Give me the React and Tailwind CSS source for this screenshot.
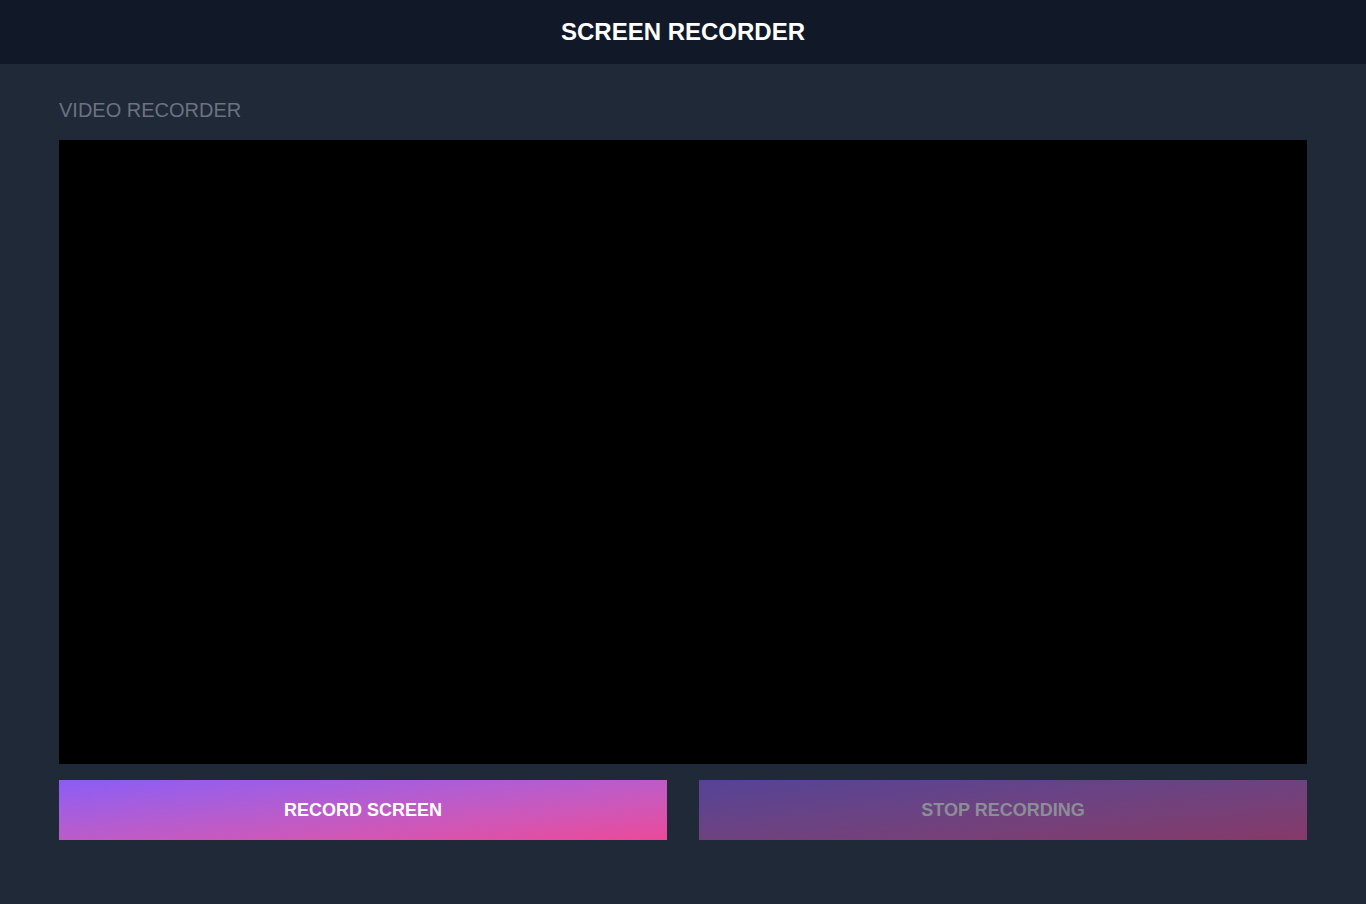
export default function App() {
  return (
    <div className="min-h-screen bg-[#1f2937] font-['Liberation_Sans',Arial,sans-serif]">
      <header className="h-16 bg-[#111827] flex items-center justify-center">
        <h1 className="text-2xl font-bold text-white">SCREEN RECORDER</h1>
      </header>
      <main className="max-w-7xl mx-auto px-4 py-8">
        <h2 className="text-xl leading-7 text-[#6b7280] mb-4">VIDEO RECORDER</h2>
        <div className="w-full h-[624px] bg-black"></div>
        <div className="grid grid-cols-2 gap-8 mt-4">
          <button className="h-15 bg-linear-to-br from-[#8b5cf6] to-[#ec4899] text-white font-bold text-lg">
            RECORD SCREEN
          </button>
          <button disabled className="h-15 bg-linear-to-br from-[#8b5cf6]/50 to-[#ec4899]/50 text-[#8b8e96] font-bold text-lg">
            STOP RECORDING
          </button>
        </div>
      </main>
    </div>
  );
}
